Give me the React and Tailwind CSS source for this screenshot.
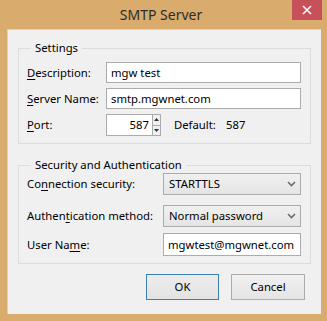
import React from "react";

const font = { fontFamily: '"Noto Sans", "Open Sans", sans-serif' };

function U({ children }) {
  return <span className="underline underline-offset-[2px] decoration-[1px]">{children}</span>;
}

function Chevron() {
  return (
    <svg width="9" height="6" viewBox="0 0 9 6" className="shrink-0">
      <polyline points="1,1 4.5,4.5 8,1" fill="none" stroke="#6d6d6d" strokeWidth="1.6" />
    </svg>
  );
}

function Select({ value }) {
  return (
    <div className="w-[138px] h-[22px] border border-[#acacac] bg-gradient-to-b from-[#f0f0f0] to-[#e5e5e5] flex items-center pl-[5px] pr-[4px] justify-between">
      <span>{value}</span>
      <Chevron />
    </div>
  );
}

export default function App() {
  return (
    <div
      className="w-[327px] h-[321px] bg-[#d9ab6c] flex flex-col text-[11.3px] text-black leading-[16px]"
      style={font}
    >
      {/* title bar */}
      <div className="h-[29px] flex shrink-0">
        <div className="flex-1 flex items-center justify-center pl-[30px] pt-[1px] text-[14px] text-[#2b2b2b]">
          SMTP Server
        </div>
        <div className="w-[30px] h-[20px] mr-[5px] bg-[#c7505a] flex items-center justify-center">
          <svg width="10" height="10" viewBox="0 0 10 10">
            <path d="M1 1 L9 9 M9 1 L1 9" stroke="white" strokeWidth="1.5" />
          </svg>
        </div>
      </div>
      {/* client */}
      <div className="ml-[7px] mr-[6px] h-[285px] bg-[#f0f0f0] border-t border-l border-[#e7cfa6] flex flex-col px-[10px]">
        <fieldset className="mt-[10px] border border-[#dcdcdc] pl-[8px] pr-[6px] pb-[7px]">
          <legend className="ml-[4px] px-[4px] h-[16px]">Settings</legend>
          <div className="flex flex-col gap-[5px] pt-[6px]">
            <div className="flex items-center">
              <div className="w-[79px]"><U>D</U>escription:</div>
              <div className="w-[195px] h-[21px] border border-[#acacac] bg-white pl-[4px] flex items-center">mgw test</div>
            </div>
            <div className="flex items-center">
              <div className="w-[79px]"><U>S</U>erver Name:</div>
              <div className="w-[195px] h-[21px] border border-[#acacac] bg-white pl-[4px] flex items-center">smtp.mgwnet.com</div>
            </div>
            <div className="flex items-center">
              <div className="w-[79px]"><U>P</U>ort:</div>
              <div className="w-[47px] h-[22px] border border-[#acacac] bg-white pr-[3px] flex items-center justify-end">587</div>
              <div className="w-[8px] h-[22px] flex flex-col border border-l-0 border-[#acacac]">
                <div className="flex-1 flex items-center justify-center border-b border-[#acacac]">
                  <svg width="5" height="3" viewBox="0 0 5 3"><path d="M0 3 L2.5 0 L5 3 Z" fill="#333" /></svg>
                </div>
                <div className="flex-1 flex items-center justify-center">
                  <svg width="5" height="3" viewBox="0 0 5 3"><path d="M0 0 L2.5 3 L5 0 Z" fill="#333" /></svg>
                </div>
              </div>
              <div className="ml-[13px] w-[52px]">Default:</div>
              <div>587</div>
            </div>
          </div>
        </fieldset>
        <fieldset className="mt-[13px] border border-[#dcdcdc] pl-[8px] pr-[6px] pb-[7px]">
          <legend className="ml-[4px] px-[4px] h-[16px]">Security and Authentication</legend>
          <div className="flex flex-col gap-[10px]">
            <div className="flex items-center">
              <div className="w-[136px]">Co<U>n</U>nection security:</div>
              <Select value="STARTTLS" />
            </div>
            <div className="flex items-center">
              <div className="w-[136px]">Authen<U>t</U>ication method:</div>
              <Select value="Normal password" />
            </div>
            <div className="flex items-center -mt-[4px]">
              <div className="w-[136px]">User Na<U>m</U>e:</div>
              <div className="w-[138px] h-[23px] border border-[#acacac] bg-white pl-[4px] flex items-center">mgwtest@mgwnet.com</div>
            </div>
          </div>
        </fieldset>
        <div className="mt-[10px] flex justify-end gap-[12px] pr-[6px]">
          <div className="w-[73px] h-[26px] border border-[#3c7fb1] bg-gradient-to-b from-[#ececec] to-[#e3e3e3] flex items-center justify-center">OK</div>
          <div className="w-[74px] h-[26px] border border-[#acacac] bg-gradient-to-b from-[#f0f0f0] to-[#e5e5e5] flex items-center justify-center">Cancel</div>
        </div>
      </div>
    </div>
  );
}
